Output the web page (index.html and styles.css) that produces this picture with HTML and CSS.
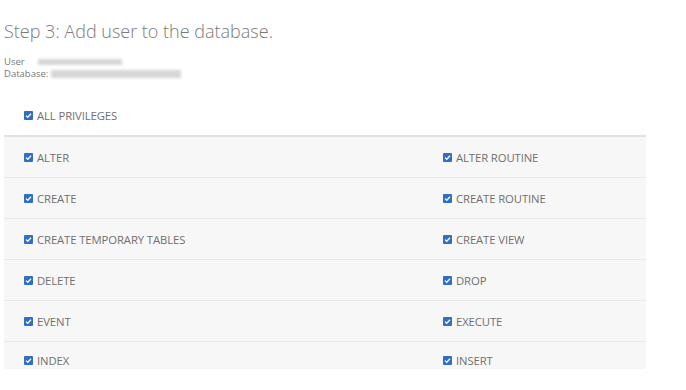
FILE: index.html
```html
<!DOCTYPE html>
<html>
<head>
<meta charset="utf-8">
<link rel="stylesheet" href="styles.css">
</head>
<body>
<div class="page">
  <h1 class="title">Step 3: Add user to the database.</h1>
  <div class="meta">
    <div class="meta-row"><span>User</span><span class="blur blur-user"></span></div>
    <div class="meta-row"><span>Database:</span><span class="blur blur-db"></span></div>
  </div>
  <div class="all-row">
    <label class="priv"><svg class="cb" viewBox="0 0 9 9"><rect width="9" height="9" rx="1" fill="#2f6fc6"/><path d="M2 4.6 L3.8 6.3 L7 2.8" fill="none" stroke="#fff" stroke-width="1.3"/></svg>ALL PRIVILEGES</label>
  </div>
  <div class="table">
    <div class="row"><label class="priv"><svg class="cb" viewBox="0 0 9 9"><rect width="9" height="9" rx="1" fill="#2f6fc6"/><path d="M2 4.6 L3.8 6.3 L7 2.8" fill="none" stroke="#fff" stroke-width="1.3"/></svg>ALTER</label><label class="priv"><svg class="cb" viewBox="0 0 9 9"><rect width="9" height="9" rx="1" fill="#2f6fc6"/><path d="M2 4.6 L3.8 6.3 L7 2.8" fill="none" stroke="#fff" stroke-width="1.3"/></svg>ALTER ROUTINE</label></div>
    <div class="row"><label class="priv"><svg class="cb" viewBox="0 0 9 9"><rect width="9" height="9" rx="1" fill="#2f6fc6"/><path d="M2 4.6 L3.8 6.3 L7 2.8" fill="none" stroke="#fff" stroke-width="1.3"/></svg>CREATE</label><label class="priv"><svg class="cb" viewBox="0 0 9 9"><rect width="9" height="9" rx="1" fill="#2f6fc6"/><path d="M2 4.6 L3.8 6.3 L7 2.8" fill="none" stroke="#fff" stroke-width="1.3"/></svg>CREATE ROUTINE</label></div>
    <div class="row"><label class="priv"><svg class="cb" viewBox="0 0 9 9"><rect width="9" height="9" rx="1" fill="#2f6fc6"/><path d="M2 4.6 L3.8 6.3 L7 2.8" fill="none" stroke="#fff" stroke-width="1.3"/></svg>CREATE TEMPORARY TABLES</label><label class="priv"><svg class="cb" viewBox="0 0 9 9"><rect width="9" height="9" rx="1" fill="#2f6fc6"/><path d="M2 4.6 L3.8 6.3 L7 2.8" fill="none" stroke="#fff" stroke-width="1.3"/></svg>CREATE VIEW</label></div>
    <div class="row"><label class="priv"><svg class="cb" viewBox="0 0 9 9"><rect width="9" height="9" rx="1" fill="#2f6fc6"/><path d="M2 4.6 L3.8 6.3 L7 2.8" fill="none" stroke="#fff" stroke-width="1.3"/></svg>DELETE</label><label class="priv"><svg class="cb" viewBox="0 0 9 9"><rect width="9" height="9" rx="1" fill="#2f6fc6"/><path d="M2 4.6 L3.8 6.3 L7 2.8" fill="none" stroke="#fff" stroke-width="1.3"/></svg>DROP</label></div>
    <div class="row"><label class="priv"><svg class="cb" viewBox="0 0 9 9"><rect width="9" height="9" rx="1" fill="#2f6fc6"/><path d="M2 4.6 L3.8 6.3 L7 2.8" fill="none" stroke="#fff" stroke-width="1.3"/></svg>EVENT</label><label class="priv"><svg class="cb" viewBox="0 0 9 9"><rect width="9" height="9" rx="1" fill="#2f6fc6"/><path d="M2 4.6 L3.8 6.3 L7 2.8" fill="none" stroke="#fff" stroke-width="1.3"/></svg>EXECUTE</label></div>
    <div class="row last"><label class="priv"><svg class="cb" viewBox="0 0 9 9"><rect width="9" height="9" rx="1" fill="#2f6fc6"/><path d="M2 4.6 L3.8 6.3 L7 2.8" fill="none" stroke="#fff" stroke-width="1.3"/></svg>INDEX</label><label class="priv"><svg class="cb" viewBox="0 0 9 9"><rect width="9" height="9" rx="1" fill="#2f6fc6"/><path d="M2 4.6 L3.8 6.3 L7 2.8" fill="none" stroke="#fff" stroke-width="1.3"/></svg>INSERT</label></div>
  </div>
</div>
</body>
</html>
```

FILE: styles.css
```css
html, body {
  margin: 0;
  padding: 0;
  background: #fff;
}
.page {
  width: 642px;
  padding: 0 0 0 4px;
  font-family: "Open Sans", "Liberation Sans", sans-serif;
  color: #6b6b6b;
}
.title {
  margin: 0;
  padding-top: 18px;
  font-size: 18px;
  line-height: 26px;
  font-weight: 300;
  color: #7a7a7a;
}
.meta {
  margin-top: 12px;
  font-size: 9.5px;
  line-height: 13px;
  color: #777;
}
.meta-row {
  display: flex;
  align-items: center;
  gap: 3px;
  height: 11px;
  overflow: visible;
}
.meta-row + .meta-row {
  margin-top: 1px;
}
.blur {
  display: inline-block;
  height: 6px;
  background: #d6d6d6;
  filter: blur(1.5px);
}
.blur-user { width: 84px; margin-left: 10px; }
.blur-db { width: 130px; height: 8px; }
.all-row {
  height: 40px;
  margin-top: 16px;
  display: flex;
  align-items: center;
  padding-left: 20px;
  box-sizing: border-box;
}
.priv {
  display: flex;
  align-items: center;
  gap: 4px;
  font-size: 11.3px;
  color: #707070;
  letter-spacing: -0.1px;
}
.cb {
  width: 9px;
  height: 9px;
  flex: none;
}
.table {
  border-top: 2px solid #e2e2e2;
  background: #f7f7f7;
}
.row {
  display: grid;
  grid-template-columns: 419px 1fr;
  height: 41px;
  align-items: center;
  padding-left: 20px;
  border-bottom: 1px solid #e9e9e9;
  box-sizing: border-box;
}
.row.last {
  height: 27px;
  border-bottom: none;
  padding-top: 10px;
}
```
